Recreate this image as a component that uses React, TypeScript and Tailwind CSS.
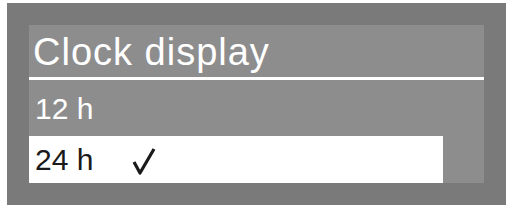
export default function App() {
  return (
    <div className="w-[507px] h-[207px] bg-white pt-[3px] pl-[7px] pr-[1px] pb-[2px]">
      <div
        className="w-full h-full bg-[#7b7a7b] pt-[22px] pl-[22px] pr-[22px] pb-[22px]"
        style={{ fontFamily: '"Liberation Sans", Arial, sans-serif' }}
      >
        <div className="h-full bg-[#8e8d8e] flex flex-col">
          <div className="h-[52px] pl-[4px] pt-[5px] text-[38px] leading-[44px] tracking-[1px] text-white">
            Clock display
          </div>
          <div className="h-[3px] bg-white" />
          <div className="h-[56px] pl-[6px] pt-[14px] text-[30px] leading-[30px] text-white">
            12 h
          </div>
          <div className="flex-1 w-[414px] bg-white flex items-center pl-[6px] text-[30px] leading-[30px] text-[#1a1a1a]">
            <span>24 h</span>
            <svg className="ml-[38px] mt-[2px]" width="26" height="30" viewBox="0 0 26 30">
              <path d="M3 16 L9 27 L23 3" fill="none" stroke="#1a1a1a" strokeWidth="3.2" strokeLinejoin="round" />
            </svg>
          </div>
        </div>
      </div>
    </div>
  );
}
